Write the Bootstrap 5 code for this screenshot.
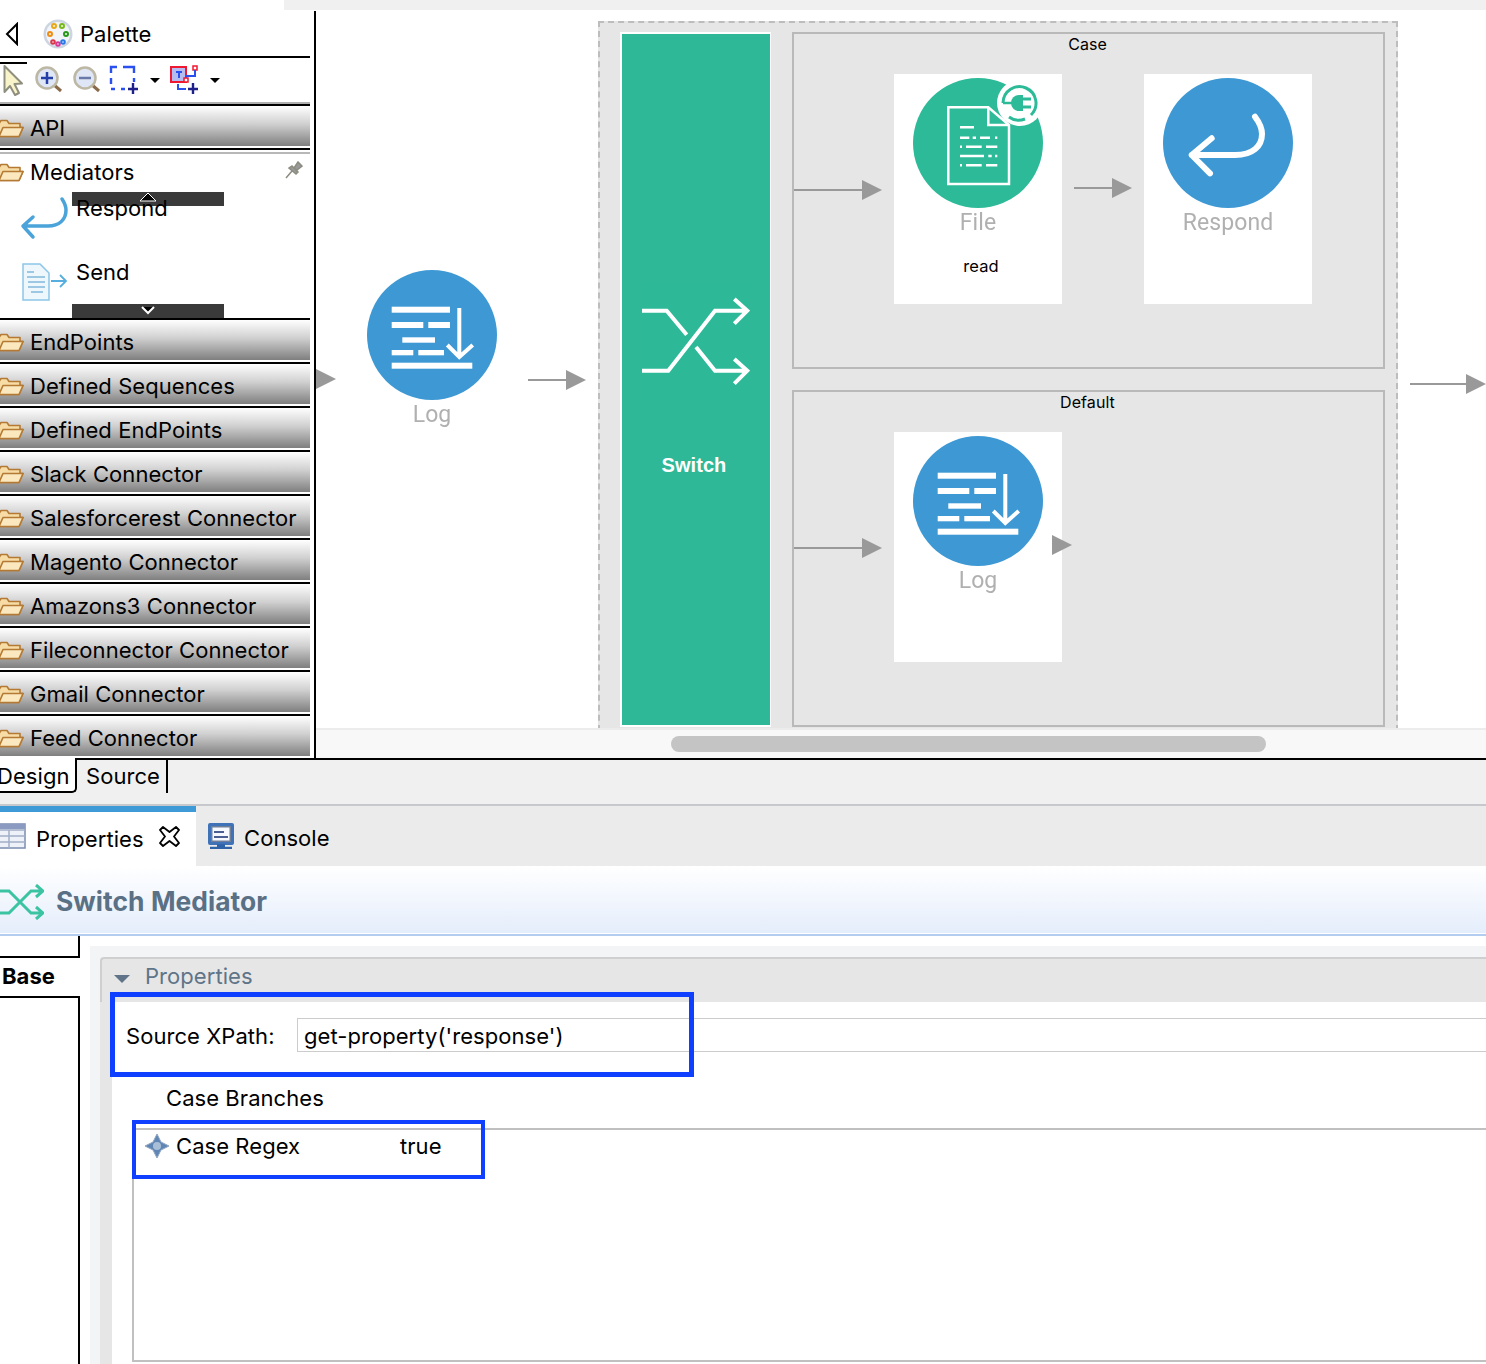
<!DOCTYPE html>
<html lang="en">

<head>
    <meta charset="UTF-8" />
    <title>Switch Mediator</title>
    <link href="https://cdn.jsdelivr.net/npm/bootstrap@5.3.3/dist/css/bootstrap.min.css" rel="stylesheet" />
    <style>
        html, body { height: 1364px; overflow: hidden; }
        body { background: #fff; font-family: "Inter", "Liberation Sans", sans-serif; color: #000; font-size: 22px; letter-spacing: .06px; }
        .app-shell { width: 1486px; height: 1364px; overflow: hidden; }

        .top-strip { height: 11px; margin-left: 284px; padding-bottom: 1px; background: #fff; }
        .top-strip div { height: 10px; background: #f0f0f0; }
        .editor-row { height: 747px; }

        /* palette */
        .palette-side { width: 316px; flex: none; border-right: 2px solid #000; padding-right: 4px; }
        .palette-head { height: 47px; border-bottom: 2px solid #000; padding-left: 5px; line-height: 1; }
        .palette-head span { margin-left: 7px; margin-top: 1px; }
        .tool-strip { height: 46px; position: relative; border-bottom: 2px solid #b0b0b0; }
        .tool-strip svg { display: block; }
        .tool-rule { position: absolute; left: 0; top: 4px; width: 27px; height: 2px; background: #000; }
        .drawer-row { height: 44px; padding-top: 4px; border-top: 2px solid #000; border-bottom: 2px solid #fff; background: linear-gradient(#fff, #d0d0d0 45%, #7f7f7f); background-clip: padding-box; }
        .folder-ico { margin-left: -2px; margin-right: 6px; flex: none; }
        .drawer-open { height: 170px; border-top: 2px solid #000; position: relative; }
        .drawer-open-rule { height: 2px; margin-top: 2px; background: #b8b8b8; }
        .drawer-open-title { height: 36px; }
        .pin-ico { position: absolute; right: 7px; top: 11px; }
        .med-item { height: 62px; padding-left: 20px; }
        .med-item span { margin-left: 8px; position: relative; z-index: 1; }
        .med-first svg { margin-top: 6px; }
        .med-first span { margin-top: 2px; }
        .send-item svg { margin-top: 10px; }
        .send-item span { margin-top: 4px; }
        .scroll-cap { position: absolute; left: 72px; width: 152px; height: 14px; background: #3a3a3a; }
        .scroll-up { top: 42px; }
        .scroll-down { top: 154px; }
        .scroll-cap svg { position: absolute; left: 66px; top: 0; }

        /* canvas */
        .canvas-wrap { min-width: 0; }
        .canvas-view { height: 717px; position: relative; overflow: hidden; background: #fff; }
        .canvas-bar { height: 30px; background: #f8f8f8; border-top: 2px solid #ececec; padding: 6px 0 0 355px; }
        .canvas-thumb { width: 595px; height: 16px; border-radius: 8px; background: #c4c4c4; }
        .on-canvas { position: absolute; }
        .head-in { left: 0; top: 358px; }
        .log-out { left: 51px; top: 259px; width: 130px; }
        .arrow-a { left: 212px; top: 359px; }
        .arrow-b { left: 1094px; top: 363px; }
        .diagram-lab { font-family: "Roboto", "Liberation Sans", sans-serif; font-size: 23px; color: #b0b0b0; line-height: 30px; text-align: center; filter: blur(.4px); }

        .seq-box { left: 282px; top: 10px; width: 800px; height: 730px; background: #e6e6e6; border: 2px dashed #bdbdbd; padding: 9px 0 0 20px; gap: 21px; }
        .switch-col { width: 151px; height: 695px; flex: none; background: #2fb897; border: 2px solid #fff; border-right-width: 1px; position: relative; }
        .switch-glyph { position: absolute; left: 20px; top: 249px; background: #2db998; }
        .switch-name { position: absolute; left: 0; right: 4px; top: 416px; text-align: center; font-family: "Liberation Sans", sans-serif; font-weight: 700; font-size: 20px; color: #fff; }
        .branch-col { gap: 21px; width: 593px; flex: none; }
        .branch-box { height: 337px; border: 2px solid #b9b9b9; }
        .branch-name { height: 40px; text-align: center; font-size: 16px; line-height: 20px; margin-left: -2px; }
        .branch-row { height: 230px; }
        .link-a { margin-top: 106px; margin-right: 12px; flex: none; }
        .link-b { margin-top: 104px; margin-left: 12px; margin-right: 12px; flex: none; }
        .node-card { width: 168px; height: 230px; background: #fff; flex: none; padding: 4px 0 0 19px; position: relative; }
        .node-card svg.circ { display: block; }
        .node-card .diagram-lab { margin: 0 0 0 -19px; width: 168px; }
        .node-sub { font-size: 16.5px; text-align: center; margin: 18px 0 0 -16px; width: 168px; line-height: 20px; }
        .node-head { position: absolute; left: 158px; top: 103px; }

        /* bottom tabs */
        .src-tabs { height: 48px; background: #f0f0f0; border-bottom: 2px solid #c6c8cc; position: relative; }
        .src-rule { position: absolute; left: 77px; right: 0; top: 0; height: 2px; background: #000; }
        .src-design { width: 77px; height: 35px; background: #fff; border-bottom: 2px solid #000; border-bottom-right-radius: 5px; border-right: 2px solid #000; overflow: hidden; line-height: 37px; text-indent: -3px; }
        .src-source { width: 91px; height: 35px; padding-left: 9px; border-right: 2px solid #000; line-height: 37px; }

        .view-tabs { height: 60px; background: #ebebeb; }
        .view-on { width: 196px; background: #fff; border-top: 6px solid #3d9ad6; }
        .view-on svg.tab-ico { margin: -7px 10px 0 0; }
        .view-on svg.tab-x { margin: -5px 0 0 15px; }
        .view-off { padding: 4px 0 0 12px; }
        .view-off svg { margin: -5px 10px 0 0; }

        .title-band { height: 70px; padding-top: 3px; background: linear-gradient(#fff, #e4edfb); border-bottom: 2px solid #b3cdf0; box-shadow: inset 0 -1px 0 #fff; }
        .title-band h1 { margin: 0 0 0 12px; font-size: 26.4px; font-weight: 700; color: #5a7085; font-family: "Inter", sans-serif; line-height: 1; }

        .prop-row { height: 428px; }
        .base-col { width: 80px; flex: none; }
        .base-stub { height: 22px; border-right: 2px solid #000; border-bottom: 2px solid #000; }
        .base-tab { height: 38px; font-weight: 700; font-size: 22px; padding-left: 2px; line-height: 36px; }
        .base-rest { height: 368px; border-top: 2px solid #000; border-right: 2px solid #000; }
        .prop-main { margin: 10px 0 0 10px; padding: 11px 0 0 10px; background: #f3f4f6; min-width: 0; }
        .section-head { height: 45px; background: #e6e6e6; border-top: 2px solid #cfcfcf; border-left: 2px solid #cfcfcf; border-top-left-radius: 4px; color: #5f7488; padding-left: 13px; }
        .section-head span { margin-left: 15px; margin-top: -9px; }
        .section-head svg { margin-top: -4px; margin-left: -1px; }
        .section-body { border-left: 12px solid #e6e6e6; background: #fff; height: 370px; position: relative; }
        .xpath-row { padding: 16px 0 0 14px; height: 76px; }
        .xpath-row label { width: 171px; flex: none; margin-top: 2px; }
        .xpath-field { flex: 1; height: 34px; padding: 2px 6px 0; border: 1px solid #ccc; border-radius: 0; border-right: 0; font-size: 22px; letter-spacing: .06px; color: #000; background: #fff; outline: 0; font-family: inherit; margin-right: -1px; }
        .branches-name { padding-left: 54px; line-height: 30px; height: 50px; padding-top: 5px; }
        .branch-table { margin-left: 20px; height: 234px; border: 2px solid #c0c0c0; border-right: 0; padding: 2px 0 0 11px; }
        .branch-table svg { margin-right: 7px; flex: none; }
        .branch-table .b-key { width: 224px; flex: none; margin-top: -2px; }
        .branch-table .b-val { margin-top: -2px; }
        .blue-mark { position: absolute; border: 5px solid #1040ff; pointer-events: none; }
        .mark-one { left: -2px; top: -10px; width: 584px; height: 85px; }
        .mark-two { left: 20px; top: 118px; width: 353px; height: 59px; border-width: 4px; }
    </style>
</head>

<body>
    <svg width="0" height="0" class="d-block">
        <defs>
            <symbol id="folder" viewBox="0 0 26 20">
                <path d="M1 5.5V18.5H21L25 9.5H22V5.5H11L9 2.5H3Z" fill="#f7dca6" stroke="#b47a34" stroke-width="1.6" stroke-linejoin="round"/>
                <path d="M1 18.5 5 9.5H25L21 18.5Z" fill="#fbe8bf" stroke="#b47a34" stroke-width="1.6" stroke-linejoin="round"/>
            </symbol>
            <symbol id="flow-arrow" viewBox="0 0 88 20">
                <path d="M0 10H68" stroke="#999" stroke-width="2"/>
                <path d="M68 0 88 10 68 20Z" fill="#999"/>
            </symbol>
            <symbol id="log-circle" viewBox="0 0 130 130">
                <circle cx="65" cy="65" r="65" fill="#3d98d3"/>
                <g fill="#fff">
                    <rect x="24.7" y="36.7" width="58.3" height="6"/>
                    <rect x="24.7" y="52" width="31.6" height="6"/>
                    <rect x="61.3" y="52" width="21.7" height="6"/>
                    <rect x="35.3" y="67.3" width="32.7" height="5.4"/>
                    <rect x="24.7" y="80" width="21.6" height="5.3"/>
                    <rect x="51.3" y="80" width="25.7" height="5.3"/>
                    <rect x="24.7" y="92.7" width="80.6" height="6"/>
                </g>
                <path d="M92.3 38V87M80.3 75 92.3 87 105.7 75" fill="none" stroke="#fff" stroke-width="4"/>
            </symbol>
            <symbol id="respond-curve" viewBox="0 0 130 130">
                <path d="M28.7 77H72C90 77 99 68 99 56 99 49 96 44 92 38.7M48.7 60.3 28.7 77 47 95.3" fill="none" stroke="currentColor" stroke-width="6" stroke-linecap="round" stroke-linejoin="round"/>
            </symbol>
            <symbol id="switch-cross" viewBox="0 0 108 117">
                <path d="M0 27.7H24.7L44.7 51.7M54 64 73 87.7H105.3M0 87.7H26.3L73 27.7H105.3M92.3 16 105.3 27.7 92.3 40.7M92.3 76 105.3 87.7 92.3 100.7" fill="none" stroke="currentColor" stroke-width="4"/>
            </symbol>
        </defs>
    </svg>

    <div class="app-shell d-flex flex-column">
        <div class="top-strip"><div></div></div>

        <div class="editor-row d-flex">
            <!-- palette -->
            <aside class="palette-side">
                <div class="palette-head d-flex align-items-center">
                    <svg width="14" height="24" viewBox="0 0 14 24" class="me-4"><path d="M12 2 2 12 12 22Z" fill="#fff" stroke="#000" stroke-width="2"/></svg>
                    <svg width="30" height="30" viewBox="0 0 30 30">
                        <circle cx="15" cy="15" r="14.5" fill="#ccd5e0"/>
                        <circle cx="15" cy="15" r="12" fill="#f1f4f8"/>
                        <g fill="none" stroke-width="2">
                            <circle cx="11" cy="7" r="2" stroke="#e8a818"/><circle cx="19" cy="7" r="2" stroke="#78b818"/>
                            <circle cx="7" cy="15" r="2" stroke="#f08c10"/><circle cx="23" cy="15" r="2" stroke="#289818"/>
                            <circle cx="10" cy="23" r="1.800" stroke="#d83848"/><circle cx="15" cy="25" r="1.800" stroke="#d83898"/><circle cx="20" cy="23" r="1.800" stroke="#2878e8"/>
                        </g>
                    </svg>
                    <span>Palette</span>
                </div>
                <div class="tool-strip">
                    <div class="tool-rule"></div>
                    <svg width="225" height="44" viewBox="0 0 225 44">
                        <path d="M4.500 8V34L10 28 15 37 19 35 14.500 26 22 25.500Z" fill="#f8f3c8" stroke="#8f8f80" stroke-width="2" stroke-linejoin="round"/>
                        <g>
                            <path d="M53 26 61 33" stroke="#8a6a48" stroke-width="3"/>
                            <circle cx="47" cy="20" r="10.500" fill="#dfe6f5" stroke="#bdb8a4" stroke-width="2.500"/>
                            <path d="M41 20H53M47 14V26" stroke="#2440a8" stroke-width="2.500"/>
                        </g>
                        <g>
                            <path d="M91 26 99 33" stroke="#8a6a48" stroke-width="3"/>
                            <circle cx="85" cy="20" r="10.500" fill="#dfe6f5" stroke="#bdb8a4" stroke-width="2.500"/>
                            <path d="M79 20H91" stroke="#6a7aa8" stroke-width="2.500"/>
                        </g>
                        <path d="M111 15V9H117M123 9H128M128 9H134V15M134 20V24M111 20V26M111 31H115M121 31H125" fill="none" stroke="#2a50f0" stroke-width="2.400"/>
                        <path d="M133 25V36M128 31H138" stroke="#20208a" stroke-width="2.400"/>
                        <path d="M150 20H160L155 25Z" fill="#000"/>
                        <rect x="171" y="9" width="15" height="15" fill="#b4bcf0" stroke="#f01830" stroke-width="2"/>
                        <rect x="193" y="8" width="4" height="4" fill="#fff" stroke="#f01830" stroke-width="1.500"/>
                        <path d="M176 14H182M179 14V20M195 12V18H186V22" fill="none" stroke="#2a50f0" stroke-width="2"/>
                        <rect x="184" y="20" width="4" height="4" fill="#fff" stroke="#f01830" stroke-width="1.500"/>
                        <path d="M178 26V31H186" fill="none" stroke="#2a50f0" stroke-width="2"/>
                        <path d="M193 25V36M188 31H198" stroke="#20208a" stroke-width="2.400"/>
                        <path d="M210 20H220L215 25Z" fill="#000"/>
                    </svg>
                </div>

                <div class="drawer-row d-flex align-items-center">
                    <svg class="folder-ico" width="26" height="20"><use href="#folder"/></svg>API
                </div>
                <div class="drawer-open">
                    <div class="drawer-open-rule"></div>
                    <div class="drawer-open-title d-flex align-items-center">
                        <svg class="folder-ico" width="26" height="20"><use href="#folder"/></svg>Mediators
                    </div>
                    <svg class="pin-ico" width="18" height="18" viewBox="0 0 18 18"><path d="M1 17 7 10M7 5 13 11 11 13 4 7ZM9 7 13 1 17 5 12 9Z" fill="#999" stroke="#8c8c80" stroke-width="1.500"/></svg>
                    <div class="med-item med-first d-flex align-items-start">
                        <svg width="48" height="44" viewBox="0 0 48 44" class="flex-none" fill="none">
                            <path d="M3 30H28C39 30 46 24 46 14 46 9 44 6 42 3M13 21 3 30 13 41" stroke="#4aa3d9" stroke-width="3.500" stroke-linecap="round" stroke-linejoin="round"/>
                        </svg>
                        <span>Respond</span>
                    </div>
                    <div class="med-item send-item d-flex align-items-start">
                        <svg width="48" height="40" viewBox="0 0 48 40" class="flex-none" fill="none">
                            <path d="M3 2H20L29 11V38H3Z" fill="#eef7fc" stroke="#8cc6e8" stroke-width="1.500"/>
                            <path d="M7 10H14M7 15H25M8 20H25M8 25H25M11 30H23" stroke="#9cc8e4" stroke-width="2.200"/>
                            <path d="M31 19H46M40 13 46 19 40 25" stroke="#55aedd" stroke-width="1.800"/>
                        </svg>
                        <span>Send</span>
                    </div>
                    <div class="scroll-cap scroll-up"><svg width="20" height="14" viewBox="0 0 20 14"><path d="M2 9 10 1 18 9Z" fill="#000" stroke="#fff" stroke-width="1"/></svg></div>
                    <div class="scroll-cap scroll-down"><svg width="20" height="14" viewBox="0 0 20 14"><path d="M4 3 10 9 16 3" fill="#000" stroke="#fff" stroke-width="2"/></svg></div>
                </div>
                <div class="drawer-row d-flex align-items-center"><svg class="folder-ico" width="26" height="20"><use href="#folder"/></svg>EndPoints</div>
                <div class="drawer-row d-flex align-items-center"><svg class="folder-ico" width="26" height="20"><use href="#folder"/></svg>Defined Sequences</div>
                <div class="drawer-row d-flex align-items-center"><svg class="folder-ico" width="26" height="20"><use href="#folder"/></svg>Defined EndPoints</div>
                <div class="drawer-row d-flex align-items-center"><svg class="folder-ico" width="26" height="20"><use href="#folder"/></svg>Slack Connector</div>
                <div class="drawer-row d-flex align-items-center"><svg class="folder-ico" width="26" height="20"><use href="#folder"/></svg>Salesforcerest Connector</div>
                <div class="drawer-row d-flex align-items-center"><svg class="folder-ico" width="26" height="20"><use href="#folder"/></svg>Magento Connector</div>
                <div class="drawer-row d-flex align-items-center"><svg class="folder-ico" width="26" height="20"><use href="#folder"/></svg>Amazons3 Connector</div>
                <div class="drawer-row d-flex align-items-center"><svg class="folder-ico" width="26" height="20"><use href="#folder"/></svg>Fileconnector Connector</div>
                <div class="drawer-row d-flex align-items-center"><svg class="folder-ico" width="26" height="20"><use href="#folder"/></svg>Gmail Connector</div>
                <div class="drawer-row d-flex align-items-center"><svg class="folder-ico" width="26" height="20"><use href="#folder"/></svg>Feed Connector</div>
            </aside>

            <!-- diagram -->
            <div class="canvas-wrap flex-grow-1">
                <div class="canvas-view">
                    <svg class="on-canvas head-in" width="20" height="20" viewBox="0 0 20 20"><path d="M0 0 20 10 0 20Z" fill="#999"/></svg>
                    <div class="on-canvas log-out">
                        <svg width="130" height="130"><use href="#log-circle"/></svg>
                        <div class="diagram-lab">Log</div>
                    </div>
                    <svg class="on-canvas arrow-a" width="58" height="20" viewBox="30 0 58 20"><use href="#flow-arrow" width="88" height="20"/></svg>

                    <div class="on-canvas seq-box d-flex">
                        <div class="switch-col">
                            <svg class="switch-glyph text-white" width="108" height="117"><use href="#switch-cross"/></svg>
                            <div class="switch-name">Switch</div>
                        </div>
                        <div class="branch-col d-flex flex-column">
                            <div class="branch-box">
                                <div class="branch-name">Case</div>
                                <div class="branch-row d-flex">
                                    <svg class="link-a" width="88" height="20"><use href="#flow-arrow"/></svg>
                                    <div class="node-card">
                                        <svg class="circ" width="130" height="130" viewBox="0 0 130 130" overflow="visible">
                                            <circle cx="65" cy="65" r="65" fill="#2dba98"/>
                                            <path d="M35.300 29.300H75.300L96 47V106H35.300Z" fill="none" stroke="#fff" stroke-width="2.500"/>
                                            <path d="M75.300 29.300V47H96" fill="none" stroke="#fff" stroke-width="2.500"/>
                                            <path d="M47 49.300H61M47 59.700H56.300M59.700 59.700H63M67 59.700H77M82 59.700H84.300M47 68.700H49M53 68.700H68.700M73 68.700H84.300M47 78H71M75.300 78H78.700M82 78H84.300M47 87.300H49M53 87.300H68.700M73 87.300H84.300" stroke="#fff" stroke-width="2.600"/>
                                            <circle cx="107" cy="25" r="23" fill="#fff"/>
                                            <path d="M90 25A16.500 16.500 0 1 1 118 37M96 39A16.500 16.500 0 0 0 112 41" fill="none" stroke="#2dba98" stroke-width="3"/>
                                            <path d="M90 25H102" stroke="#2dba98" stroke-width="2.500"/>
                                            <path d="M110 17H106A8 8 0 0 0 106 33H110Z" fill="#2dba98"/>
                                            <path d="M110 21H118M110 29H118" stroke="#2dba98" stroke-width="2.800"/>
                                        </svg>
                                        <div class="diagram-lab">File</div>
                                        <div class="node-sub">read</div>
                                    </div>
                                    <svg class="link-b" width="58" height="20" viewBox="30 0 58 20"><use href="#flow-arrow" width="88" height="20"/></svg>
                                    <div class="node-card">
                                        <svg class="circ" width="130" height="130" viewBox="0 0 130 130">
                                            <circle cx="65" cy="65" r="65" fill="#3d98d3"/>
                                            <use href="#respond-curve" width="130" height="130" color="#fff"/>
                                        </svg>
                                        <div class="diagram-lab">Respond</div>
                                    </div>
                                </div>
                            </div>
                            <div class="branch-box">
                                <div class="branch-name">Default</div>
                                <div class="branch-row d-flex">
                                    <svg class="link-a" width="88" height="20"><use href="#flow-arrow"/></svg>
                                    <div class="node-card">
                                        <svg class="circ" width="130" height="130"><use href="#log-circle"/></svg>
                                        <div class="diagram-lab">Log</div>
                                        <svg class="node-head" width="20" height="20" viewBox="0 0 20 20"><path d="M0 0 20 10 0 20Z" fill="#999"/></svg>
                                    </div>
                                </div>
                            </div>
                        </div>
                    </div>
                    <svg class="on-canvas arrow-b" width="76" height="20" viewBox="12 0 76 20"><use href="#flow-arrow" width="88" height="20"/></svg>
                </div>
                <div class="canvas-bar"><div class="canvas-thumb"></div></div>
            </div>
        </div>

        <!-- design / source -->
        <div class="src-tabs d-flex align-items-start">
            <div class="src-rule"></div>
            <div class="src-design">Design</div>
            <div class="src-source">Source</div>
        </div>

        <!-- views -->
        <div class="view-tabs d-flex">
            <div class="view-on d-flex align-items-center">
                <svg class="tab-ico" width="26" height="26" viewBox="0 0 26 26">
                    <rect x="-2" y="1" width="27" height="24" fill="#eef1f7" stroke="#7b8cb0" stroke-width="1.500"/>
                    <path d="M-2 7H25M-2 13H25M-2 19H25M9 7V25" stroke="#a3afc8" stroke-width="1.500"/>
                    <rect x="-2" y="1" width="27" height="5" fill="#8a9ac0"/>
                </svg>
                <span>Properties</span>
                <svg class="tab-x" width="21" height="21" viewBox="0 0 21 21"><path d="M1 4 4 1 10.500 6 17 1 20 4 15 10.500 20 17 17 20 10.500 15 4 20 1 17 6 10.500Z" fill="#fff" stroke="#000" stroke-width="1.800" stroke-linejoin="round"/></svg>
            </div>
            <div class="view-off d-flex align-items-center">
                <svg width="26" height="26" viewBox="0 0 26 26">
                    <rect x="0" y="0" width="26" height="22" rx="2" fill="#3f72b6"/>
                    <rect x="3" y="3" width="20" height="16" fill="#6f7f9a"/>
                    <rect x="4.500" y="4.500" width="17" height="13" fill="#f6f9fd"/>
                    <path d="M6 9H16M6 14H20" stroke="#4a5f92" stroke-width="2"/>
                    <path d="M2 25H24M9 22.500H17" stroke="#2f63a8" stroke-width="2.500"/>
                </svg>
                <span>Console</span>
            </div>
        </div>

        <div class="title-band d-flex align-items-center">
            <svg width="44" height="36" viewBox="0 0 44 36" fill="none">
                <path d="M0 7H9L31 29H41M0 29H9L31 7H41M36 1 43 7 36 13M36 23 43 29 36 35" stroke="#3cc4a2" stroke-width="3"/>
            </svg>
            <h1>Switch Mediator</h1>
        </div>

        <div class="prop-row d-flex">
            <div class="base-col">
                <div class="base-stub"></div>
                <div class="base-tab">Base</div>
                <div class="base-rest"></div>
            </div>
            <div class="prop-main flex-grow-1">
                <div class="section-head d-flex align-items-center">
                    <svg width="16" height="10" viewBox="0 0 16 10"><path d="M0 1H16L8 9Z" fill="#5f7488"/></svg>
                    <span>Properties</span>
                </div>
                <div class="section-body">
                    <div class="xpath-row d-flex align-items-start">
                        <label>Source XPath:</label>
                        <input class="xpath-field" type="text" value="get-property('response')" />
                    </div>
                    <div class="branches-name">Case Branches</div>
                    <div class="branch-table d-flex align-items-start">
                        <svg width="24" height="28" viewBox="0 0 24 28">
                            <path d="M12 2 16 10 24 14 16 18 12 26 8 18 0 14 8 10Z" fill="#5f86b4" stroke="#8fa6c2" stroke-width="1"/>
                            <circle cx="12" cy="14" r="4" fill="#a9bfd8"/>
                        </svg>
                        <span class="b-key">Case Regex</span>
                        <span class="b-val">true</span>
                    </div>
                    <div class="blue-mark mark-one"></div>
                    <div class="blue-mark mark-two"></div>
                </div>
            </div>
        </div>
    </div>
</body>

</html>
